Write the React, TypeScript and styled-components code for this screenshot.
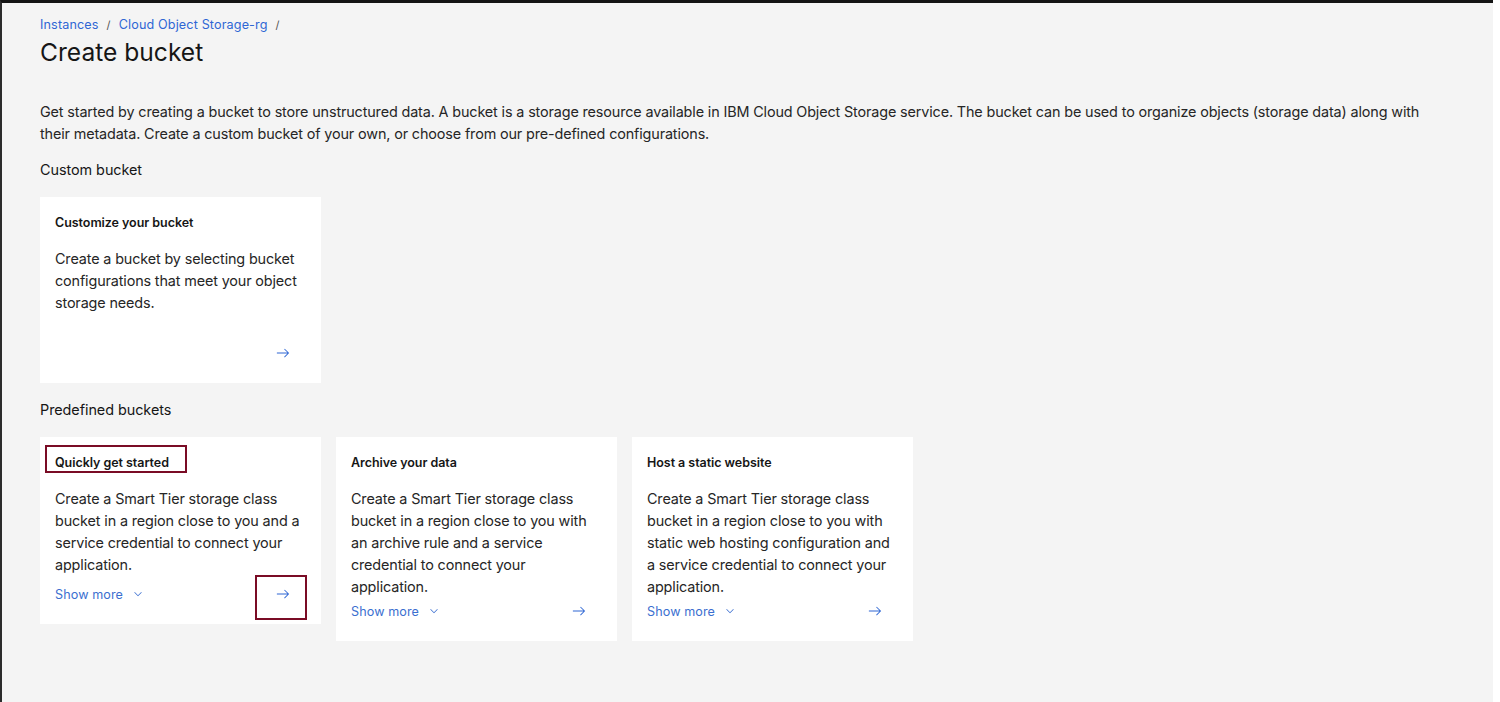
import React from "react";
import styled, { createGlobalStyle } from "styled-components";

const GlobalStyle = createGlobalStyle`
  html, body { margin: 0; padding: 0; background: #ffffff; }
  body { font-family: Inter, "Noto Sans", sans-serif; color: #161616; }
  * { box-sizing: border-box; }
`;

const Frame = styled.div`
  width: 1493px;
  height: 702px;
  border-top: 3px solid #141414;
  border-left: 2px solid #2b2b2b;
  background: #f4f4f4;
  padding: 13px 0 0 38px;
  overflow: hidden;
`;

const Breadcrumb = styled.nav`
  display: flex;
  align-items: center;
  gap: 8px;
  font-size: 12.6px;
  line-height: 18px;
  letter-spacing: 0.14px;
`;

const Crumb = styled.a`
  color: #2f67d4;
  text-decoration: none;
`;

const Sep = styled.span`
  color: #525252;
  font-size: 11px;
`;

const Title = styled.h1`
  margin: 2px 0 0;
  font-size: 24.6px;
  line-height: 32px;
  font-weight: 400;
  color: #161616;
`;

const Intro = styled.p`
  margin: 33px 0 0;
  font-size: 14.4px;
  line-height: 22px;
  letter-spacing: -0.14px;
  max-width: 1395px;
  color: #262626;
`;

const SectionLabel = styled.h2`
  margin: 15px 0 0;
  font-size: 14.4px;
  line-height: 20px;
  font-weight: 400;
  letter-spacing: -0.05px;
  color: #161616;
  & + div { margin-top: 17px; }
`;

const CardRow = styled.div`
  display: flex;
  align-items: flex-start;
  gap: 15px;
  margin-bottom: 17px;
`;

const Card = styled.div<{ $minHeight?: number }>`
  width: 281px;
  min-height: ${(p) => (p.$minHeight ? `${p.$minHeight}px` : "auto")};
  background: #ffffff;
  padding: 17px 15px 17px;
  display: flex;
  flex-direction: column;
`;

const CardTitle = styled.h3`
  margin: 0;
  font-size: 12.5px;
  line-height: 18px;
  font-weight: 600;
  color: #161616;
  letter-spacing: -0.05px;
`;

const TitleText = styled.span`
  position: relative;
  display: inline-block;
`;

const CardBody = styled.p`
  margin: 16px 0 0;
  font-size: 14.4px;
  line-height: 22px;
  letter-spacing: -0.14px;
  color: #262626;
  flex: 1;
`;

const Footer = styled.div<{ $shift?: number }>`
  height: 26px;
  margin-top: ${(p) => p.$shift ?? 0}px;
  display: flex;
  align-items: center;
  justify-content: space-between;
`;

const ShowMore = styled.button`
  display: flex;
  align-items: center;
  gap: 9px;
  background: none;
  border: 0;
  padding: 0;
  font-family: inherit;
  font-size: 12.6px;
  letter-spacing: 0.1px;
  color: #3b6fd0;
  cursor: pointer;
`;

const ArrowBtn = styled.span`
  position: relative;
  margin-left: auto;
  margin-right: 16px;
  display: flex;
  color: #2f67d4;
`;

const Highlight = styled.span<{ $t: number; $r: number; $b: number; $l: number }>`
  position: absolute;
  top: ${(p) => p.$t}px;
  right: ${(p) => p.$r}px;
  bottom: ${(p) => p.$b}px;
  left: ${(p) => p.$l}px;
  border: 2px solid #7a0c25;
  pointer-events: none;
`;

const Arrow = () => (
  <svg width="14" height="14" viewBox="0 0 16 16" fill="currentColor">
    <path d="M9.3 3.7L13.1 7.5 1 7.5 1 8.5 13.1 8.5 9.3 12.3 10 13 15 8 10 3z" />
  </svg>
);

const Chevron = () => (
  <svg width="12" height="12" viewBox="0 0 16 16" fill="currentColor">
    <path d="M8 11L3 6 3.7 5.3 8 9.6 12.3 5.3 13 6z" />
  </svg>
);

type Bucket = { title: string; body: string };

const predefined: Bucket[] = [
  {
    title: "Quickly get started",
    body:
      "Create a Smart Tier storage class bucket in a region close to you and a service credential to connect your application.",
  },
  {
    title: "Archive your data",
    body:
      "Create a Smart Tier storage class bucket in a region close to you with an archive rule and a service credential to connect your application.",
  },
  {
    title: "Host a static website",
    body:
      "Create a Smart Tier storage class bucket in a region close to you with static web hosting configuration and a service credential to connect your application.",
  },
];

export default function App() {
  return (
    <>
      <GlobalStyle />
      <Frame>
        <Breadcrumb>
          <Crumb href="#">Instances</Crumb>
          <Sep>/</Sep>
          <Crumb href="#">Cloud Object Storage-rg</Crumb>
          <Sep>/</Sep>
        </Breadcrumb>
        <Title>Create bucket</Title>
        <Intro>
          Get started by creating a bucket to store unstructured data. A bucket is a storage resource
          available in IBM Cloud Object Storage service. The bucket can be used to organize objects
          (storage data) along with their metadata. Create a custom bucket of your own, or choose from
          our pre-defined configurations.
        </Intro>
        <SectionLabel>Custom bucket</SectionLabel>
        <CardRow>
          <Card $minHeight={186}>
            <CardTitle>Customize your bucket</CardTitle>
            <CardBody>
              Create a bucket by selecting bucket configurations that meet your object storage needs.
            </CardBody>
            <Footer>
              <ArrowBtn>
                <Arrow />
              </ArrowBtn>
            </Footer>
          </Card>
        </CardRow>
        <SectionLabel>Predefined buckets</SectionLabel>
        <CardRow>
          {predefined.map((b, i) => (
            <Card key={b.title}>
              <CardTitle>
                <TitleText>
                  {b.title}
                  {i === 0 && <Highlight $t={-9} $r={-18} $b={-1} $l={-10} />}
                </TitleText>
              </CardTitle>
              <CardBody>{b.body}</CardBody>
              <Footer $shift={i === 0 ? 5 : 0}>
                <ShowMore>
                  Show more <Chevron />
                </ShowMore>
                <ArrowBtn>
                  <Arrow />
                  {i === 0 && <Highlight $t={-12} $r={-17} $b={-19} $l={-21} />}
                </ArrowBtn>
              </Footer>
            </Card>
          ))}
        </CardRow>
      </Frame>
    </>
  );
}
